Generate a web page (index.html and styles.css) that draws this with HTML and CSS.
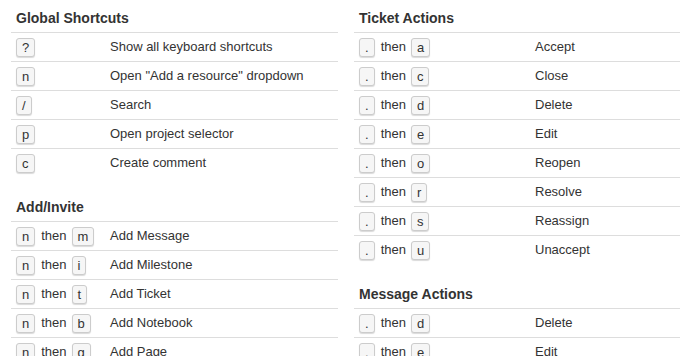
FILE: index.html
```html
<!DOCTYPE html>
<html lang="en">
<head>
    <meta charset="UTF-8">
    <meta name="viewport" content="width=device-width, initial-scale=1.0">
    <title>Keyboard Shortcuts</title>
    <link rel="stylesheet" href="styles.css">
</head>
<body>
    <div class="shortcuts">
        <!-- Left column -->
        <div class="column left">
            <h4 class="section-title">Global Shortcuts</h4>
            <table class="shortcut-table">
                <tr><td class="keys"><div class="combo"><kbd>?</kbd></div></td><td>Show all keyboard shortcuts</td></tr>
                <tr><td class="keys"><div class="combo"><kbd>n</kbd></div></td><td>Open "Add a resource" dropdown</td></tr>
                <tr><td class="keys"><div class="combo"><kbd>/</kbd></div></td><td>Search</td></tr>
                <tr><td class="keys"><div class="combo"><kbd>p</kbd></div></td><td>Open project selector</td></tr>
                <tr><td class="keys"><div class="combo"><kbd>c</kbd></div></td><td>Create comment</td></tr>
            </table>

            <h4 class="section-title">Add/Invite</h4>
            <table class="shortcut-table">
                <tr><td class="keys"><div class="combo"><kbd>n</kbd><span>then</span><kbd>m</kbd></div></td><td>Add Message</td></tr>
                <tr><td class="keys"><div class="combo"><kbd>n</kbd><span>then</span><kbd>i</kbd></div></td><td>Add Milestone</td></tr>
                <tr><td class="keys"><div class="combo"><kbd>n</kbd><span>then</span><kbd>t</kbd></div></td><td>Add Ticket</td></tr>
                <tr><td class="keys"><div class="combo"><kbd>n</kbd><span>then</span><kbd>b</kbd></div></td><td>Add Notebook</td></tr>
                <tr><td class="keys"><div class="combo"><kbd>n</kbd><span>then</span><kbd>g</kbd></div></td><td>Add Page</td></tr>
            </table>
        </div>

        <!-- Right column -->
        <div class="column right">
            <h4 class="section-title">Ticket Actions</h4>
            <table class="shortcut-table">
                <tr><td class="keys"><div class="combo"><kbd>.</kbd><span>then</span><kbd>a</kbd></div></td><td>Accept</td></tr>
                <tr><td class="keys"><div class="combo"><kbd>.</kbd><span>then</span><kbd>c</kbd></div></td><td>Close</td></tr>
                <tr><td class="keys"><div class="combo"><kbd>.</kbd><span>then</span><kbd>d</kbd></div></td><td>Delete</td></tr>
                <tr><td class="keys"><div class="combo"><kbd>.</kbd><span>then</span><kbd>e</kbd></div></td><td>Edit</td></tr>
                <tr><td class="keys"><div class="combo"><kbd>.</kbd><span>then</span><kbd>o</kbd></div></td><td>Reopen</td></tr>
                <tr><td class="keys"><div class="combo"><kbd>.</kbd><span>then</span><kbd>r</kbd></div></td><td>Resolve</td></tr>
                <tr><td class="keys"><div class="combo"><kbd>.</kbd><span>then</span><kbd>s</kbd></div></td><td>Reassign</td></tr>
                <tr><td class="keys"><div class="combo"><kbd>.</kbd><span>then</span><kbd>u</kbd></div></td><td>Unaccept</td></tr>
            </table>

            <h4 class="section-title">Message Actions</h4>
            <table class="shortcut-table">
                <tr><td class="keys"><div class="combo"><kbd>.</kbd><span>then</span><kbd>d</kbd></div></td><td>Delete</td></tr>
                <tr><td class="keys"><div class="combo"><kbd>.</kbd><span>then</span><kbd>e</kbd></div></td><td>Edit</td></tr>
            </table>
        </div>
    </div>
</body>
</html>
```

FILE: styles.css
```css
body {
    margin: 0;
    padding: 0;
    background-color: #ffffff;
    font-family: "Liberation Sans", Arial, sans-serif;
    font-size: 13px;
    line-height: 20px;
    color: #333333;
    overflow: hidden;
}
.shortcuts {
    display: grid;
    grid-template-columns: 327px 326px;
    column-gap: 16px;
    padding: 8px 8px 0 11px;
}
.section-title {
    margin: 0 0 4px;
    padding-left: 5px;
    font-size: 14px;
    font-weight: bold;
    line-height: 20px;
    color: #333333;
}
.shortcut-table {
    width: 100%;
    border-collapse: collapse;
    margin-bottom: 20px;
}
.shortcut-table td {
    padding: 4px 5px;
    border-top: 1px solid #dddddd;
    vertical-align: middle;
    text-align: left;
}
.left .keys {
    width: 84px;
}
.right .keys {
    width: 166px;
}
.combo {
    display: flex;
    align-items: center;
    gap: 5px;
    height: 20px;
}
.combo span {
    margin-left: 1px;
}
kbd {
    display: inline-block;
    height: 17px;
    line-height: 17px;
    padding: 0 5px;
    font-family: "Liberation Sans", Arial, sans-serif;
    font-size: 13px;
    color: #333333;
    background-color: #f6f6f6;
    border: 1px solid #cccccc;
    border-radius: 3px;
    box-shadow: 0 1px 1px rgba(0, 0, 0, 0.15);
}
```
